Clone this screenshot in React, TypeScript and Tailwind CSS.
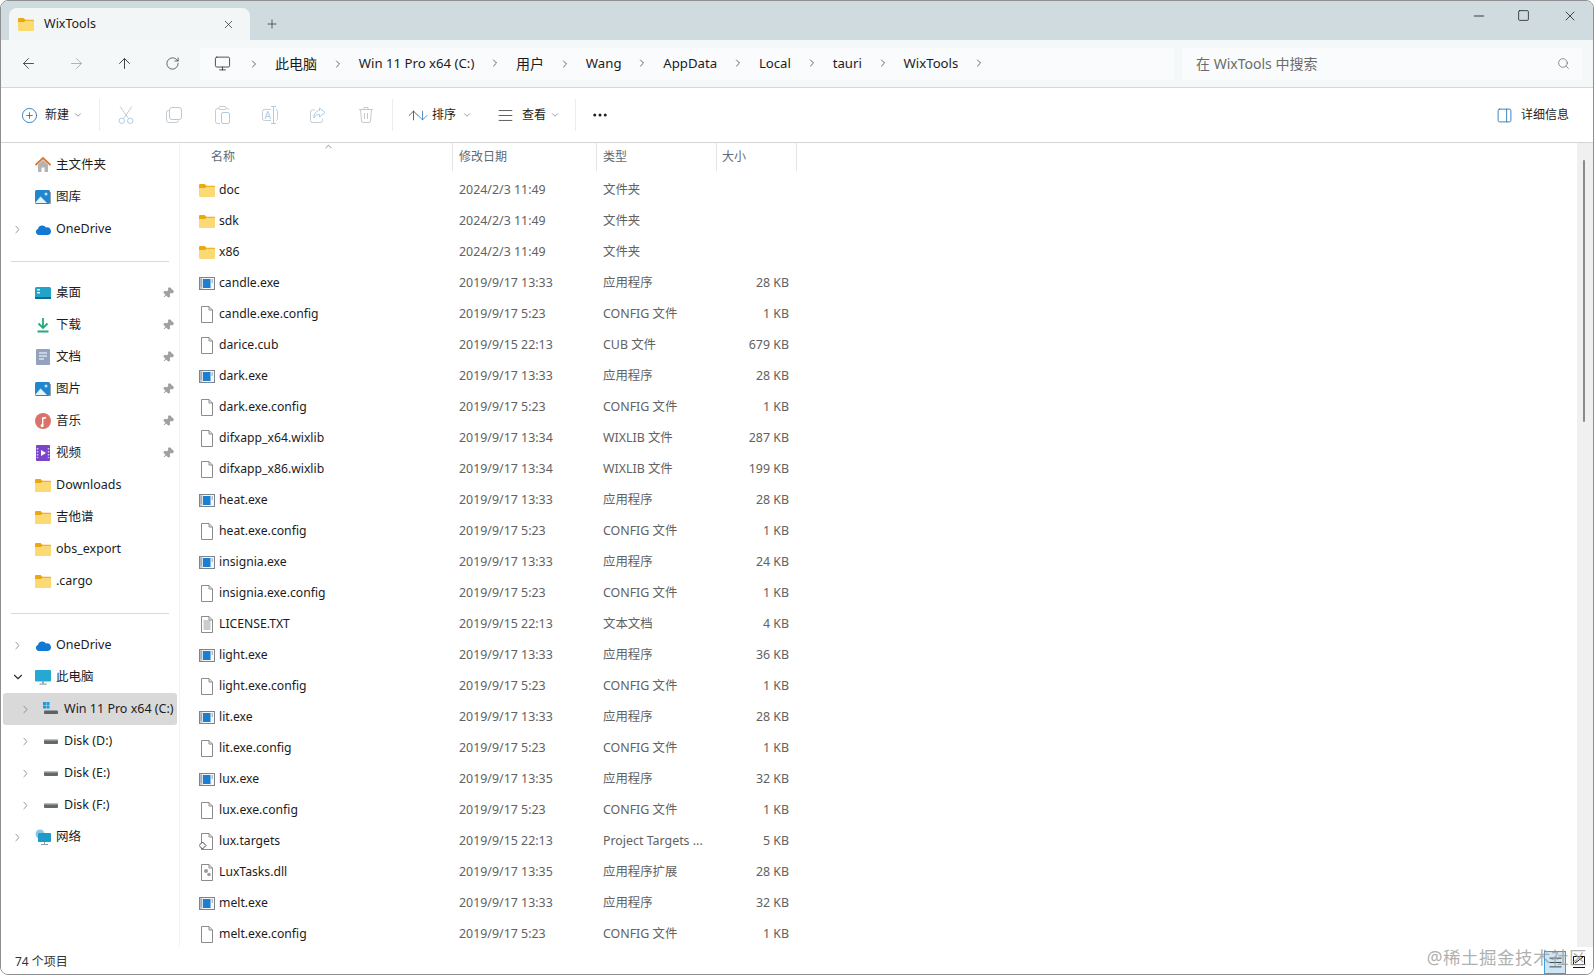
import {
  ArrowDown,
  ArrowLeft,
  ArrowRight,
  ArrowUp,
  AlignJustify,
  ChevronDown,
  ChevronRight,
  ChevronUp,
  CirclePlus,
  Minus,
  Monitor,
  MoreHorizontal,
  PanelRight,
  Pin,
  Plus,
  RotateCw,
  Search,
  Square,
  X,
} from "lucide-react";

type Tipo = "folder" | "exe" | "file" | "text" | "target" | "dll";

interface Archivo {
  nombre: string;
  fecha: string;
  tipo: string;
  size: string;
  icono: Tipo;
}

const D = "2024/2/3 11:49";
const A = "2019/9/17 13:33";
const C = "2019/9/17 5:23";

const archivos: Archivo[] = [
  { nombre: "doc", fecha: D, tipo: "文件夹", size: "", icono: "folder" },
  { nombre: "sdk", fecha: D, tipo: "文件夹", size: "", icono: "folder" },
  { nombre: "x86", fecha: D, tipo: "文件夹", size: "", icono: "folder" },
  { nombre: "candle.exe", fecha: A, tipo: "应用程序", size: "28 KB", icono: "exe" },
  { nombre: "candle.exe.config", fecha: C, tipo: "CONFIG 文件", size: "1 KB", icono: "file" },
  { nombre: "darice.cub", fecha: "2019/9/15 22:13", tipo: "CUB 文件", size: "679 KB", icono: "file" },
  { nombre: "dark.exe", fecha: A, tipo: "应用程序", size: "28 KB", icono: "exe" },
  { nombre: "dark.exe.config", fecha: C, tipo: "CONFIG 文件", size: "1 KB", icono: "file" },
  { nombre: "difxapp_x64.wixlib", fecha: "2019/9/17 13:34", tipo: "WIXLIB 文件", size: "287 KB", icono: "file" },
  { nombre: "difxapp_x86.wixlib", fecha: "2019/9/17 13:34", tipo: "WIXLIB 文件", size: "199 KB", icono: "file" },
  { nombre: "heat.exe", fecha: A, tipo: "应用程序", size: "28 KB", icono: "exe" },
  { nombre: "heat.exe.config", fecha: C, tipo: "CONFIG 文件", size: "1 KB", icono: "file" },
  { nombre: "insignia.exe", fecha: A, tipo: "应用程序", size: "24 KB", icono: "exe" },
  { nombre: "insignia.exe.config", fecha: C, tipo: "CONFIG 文件", size: "1 KB", icono: "file" },
  { nombre: "LICENSE.TXT", fecha: "2019/9/15 22:13", tipo: "文本文档", size: "4 KB", icono: "text" },
  { nombre: "light.exe", fecha: A, tipo: "应用程序", size: "36 KB", icono: "exe" },
  { nombre: "light.exe.config", fecha: C, tipo: "CONFIG 文件", size: "1 KB", icono: "file" },
  { nombre: "lit.exe", fecha: A, tipo: "应用程序", size: "28 KB", icono: "exe" },
  { nombre: "lit.exe.config", fecha: C, tipo: "CONFIG 文件", size: "1 KB", icono: "file" },
  { nombre: "lux.exe", fecha: "2019/9/17 13:35", tipo: "应用程序", size: "32 KB", icono: "exe" },
  { nombre: "lux.exe.config", fecha: C, tipo: "CONFIG 文件", size: "1 KB", icono: "file" },
  { nombre: "lux.targets", fecha: "2019/9/15 22:13", tipo: "Project Targets ...", size: "5 KB", icono: "target" },
  { nombre: "LuxTasks.dll", fecha: "2019/9/17 13:35", tipo: "应用程序扩展", size: "28 KB", icono: "dll" },
  { nombre: "melt.exe", fecha: A, tipo: "应用程序", size: "32 KB", icono: "exe" },
  { nombre: "melt.exe.config", fecha: C, tipo: "CONFIG 文件", size: "1 KB", icono: "file" },
];

function FolderIcon({ size = 16 }: { size?: number }) {
  return (
    <svg width={size} height={size * 0.8125} viewBox="0 0 16 13">
      <path d="M0 1.2A1.2 1.2 0 0 1 1.2 0h4.3L7.5 1.8H14.8A1.2 1.2 0 0 1 16 3V5H0z" fill="#e9a90f" />
      <path d="M0 4h6L7.5 2.8H14.8A1.2 1.2 0 0 1 16 4v7.8A1.2 1.2 0 0 1 14.8 13H1.2A1.2 1.2 0 0 1 0 11.8z" fill="#fbd973" />
    </svg>
  );
}

function FileIcon({ tipo }: { tipo: Tipo }) {
  if (tipo === "folder") return <FolderIcon />;
  if (tipo === "exe") {
    return (
      <svg width="16" height="13" viewBox="0 0 16 13">
        <rect x="0.5" y="0.5" width="15" height="12" fill="#f6f6f6" stroke="#7a858f" />
        <rect x="1" y="1" width="2.5" height="11" fill="#c3cbd2" />
        <rect x="4" y="2" width="7.5" height="9" fill="#1a7fd0" />
        <path d="M12.5 3h1.5M12.5 5h1.5M1.5 3h1.5M1.5 5h1.5M1.5 7h1.5M1.5 9h1.5" stroke="#7d8791" />
      </svg>
    );
  }
  return (
    <svg width="16" height="17" viewBox="0 0 16 17">
      <path d="M2.5 0.5H10L13.5 4V16.5H2.5z" fill="#fff" stroke="#8b8b8b" />
      <path d="M10 0.5V4H13.5" fill="none" stroke="#8b8b8b" />
      {tipo === "text" && <path d="M4.5 5h7M4.5 7h7M4.5 9h7M4.5 11h7M4.5 13h7" stroke="#9a9a9a" />}
      {tipo === "dll" && (
        <g fill="#9c9c9c">
          <circle cx="7" cy="7" r="2" />
          <circle cx="10" cy="10.5" r="1.8" />
        </g>
      )}
      {tipo === "target" && <path d="M3.5 9L7 12.5L3.5 16L0 12.5z" fill="#fff" stroke="#444" />}
    </svg>
  );
}

function Fila({ a }: { a: Archivo }) {
  return (
    <div className="flex h-[31px] items-center">
      <div className="flex w-[279px] shrink-0 items-center pl-[19px]">
        <div className="flex w-[16px] justify-center">
          <FileIcon tipo={a.icono} />
        </div>
        <span className="ml-[4px] text-[12.2px] text-[#1c1c1c]">{a.nombre}</span>
      </div>
      <div className="w-[144px] shrink-0 text-[12.4px] text-[#626262]">{a.fecha}</div>
      <div className="w-[118px] shrink-0 text-[12.4px] text-[#626262]">{a.tipo}</div>
      <div className="w-[68px] shrink-0 text-right text-[12.4px] text-[#626262]">{a.size}</div>
    </div>
  );
}

function HomeIcon() {
  return (
    <svg width="16" height="16" viewBox="0 0 16 16">
      <path d="M3 7.5L8 3L13 7.5V15H9.5V10.5H6.5V15H3z" fill="#b4b4b4" />
      <path d="M0.5 8L8 1L15.5 8" fill="none" stroke="#d9762c" strokeWidth="1.8" />
    </svg>
  );
}

function GalleryIcon() {
  return (
    <svg width="16" height="16" viewBox="0 0 16 16">
      <rect x="0" y="1" width="15" height="14" rx="1.5" fill="#2186d0" />
      <path d="M0 14L5.5 7.5L12 14z" fill="#e8f4fc" />
      <circle cx="11" cy="5" r="1.5" fill="#bfe0f6" />
      <rect x="15" y="3" width="1" height="12" fill="#90a4b2" />
    </svg>
  );
}

function CloudIcon() {
  return (
    <svg width="16" height="11" viewBox="0 0 16 11">
      <path d="M4 11A3.2 3.2 0 0 1 2.8 4.9A4.6 4.6 0 0 1 11 3.4A3.8 3.8 0 0 1 13 11z" fill="#1479d3" />
    </svg>
  );
}

function DesktopIcon() {
  return (
    <svg width="16" height="12" viewBox="0 0 16 12">
      <rect width="16" height="12" rx="1.5" fill="#23a3c9" />
      <rect y="10" width="16" height="2" fill="#0d6b9a" />
      <rect x="2" y="2" width="3" height="1.5" fill="#d8f1f8" />
      <rect x="2" y="5" width="3" height="1.5" fill="#d8f1f8" />
    </svg>
  );
}

function DownloadIcon() {
  return (
    <svg width="16" height="16" viewBox="0 0 16 16" fill="none" stroke="#23a97f" strokeWidth="1.8">
      <path d="M8 1V11M3.5 6.5L8 11L12.5 6.5M2.5 14.5H13.5" />
    </svg>
  );
}

function DocIcon() {
  return (
    <svg width="14" height="16" viewBox="0 0 14 16">
      <rect width="14" height="16" rx="1" fill="#93a2bd" />
      <path d="M3 4h8M3 7h8M3 10h5" stroke="#fff" strokeWidth="1.2" />
    </svg>
  );
}

function MusicIcon() {
  return (
    <svg width="16" height="16" viewBox="0 0 16 16">
      <circle cx="8" cy="8" r="8" fill="#d9726a" />
      <path d="M7 11V4.5L11 3.8V5.5L8.4 6V11.5A1.6 1.6 0 1 1 7 11z" fill="#fff" />
    </svg>
  );
}

function VideoIcon() {
  return (
    <svg width="14" height="16" viewBox="0 0 14 16">
      <rect width="14" height="16" rx="1" fill="#7a45c9" />
      <path d="M5 5L10 8L5 11z" fill="#fff" />
      <path d="M1.5 3v10M12.5 3v10" stroke="#d9c6f5" strokeWidth="1.5" strokeDasharray="1.5 1.5" />
    </svg>
  );
}

function PcIcon() {
  return (
    <svg width="16" height="15" viewBox="0 0 16 15">
      <rect width="16" height="11.5" rx="1" fill="#25a9d3" />
      <rect x="7" y="11.5" width="2" height="2" fill="#8aa0ad" />
      <rect x="4.5" y="13.5" width="7" height="1.2" fill="#8aa0ad" />
    </svg>
  );
}

function WinDriveIcon() {
  return (
    <svg width="16" height="14" viewBox="0 0 16 14">
      <rect x="0" y="0" width="3" height="3" fill="#1b9be0" />
      <rect x="3.5" y="0" width="3" height="3" fill="#1b9be0" />
      <rect x="0" y="3.5" width="3" height="3" fill="#1b9be0" />
      <rect x="3.5" y="3.5" width="3" height="3" fill="#1b9be0" />
      <rect x="1" y="8.5" width="14" height="3.5" rx="1" fill="#5d6266" />
    </svg>
  );
}

function DiskIcon() {
  return (
    <svg width="14" height="5" viewBox="0 0 14 5">
      <rect width="14" height="5" rx="1" fill="#63686c" />
      <rect y="0" width="14" height="1.5" fill="#b9bdc0" />
    </svg>
  );
}

function NetIcon() {
  return (
    <svg width="16" height="16" viewBox="0 0 16 16">
      <circle cx="5" cy="5" r="4.5" fill="#8fc6e6" />
      <rect x="3" y="4" width="13" height="9" rx="1" fill="#1f9bc9" />
      <path d="M9.5 13v2M6 15.5h7" stroke="#8aa0ad" />
    </svg>
  );
}

// iconos de la barra: deshabilitados, gris + azul claro
const GRIS = "#c6cbcf";
const AZUL = "#a9cdea";

function CutIcon() {
  return (
    <svg width="16" height="18" viewBox="0 0 16 18" fill="none">
      <path d="M2 0.5L10.5 12.5M14 0.5L5.5 12.5" stroke={GRIS} />
      <circle cx="3.8" cy="14.8" r="2.7" stroke={AZUL} />
      <circle cx="12.2" cy="14.8" r="2.7" stroke={AZUL} />
    </svg>
  );
}

function CopyIcon() {
  return (
    <svg width="16" height="16" viewBox="0 0 16 16" fill="none">
      <path d="M3 3.5H2.5A2 2 0 0 0 0.5 5.5V13A2.5 2.5 0 0 0 3 15.5H10.5A2 2 0 0 0 12.5 13.5" stroke={GRIS} />
      <rect x="3.5" y="0.5" width="12" height="12" rx="2.5" stroke={AZUL} />
    </svg>
  );
}

function PasteIcon() {
  return (
    <svg width="15" height="18" viewBox="0 0 15 18" fill="none">
      <path d="M4 2.5H2.5A2 2 0 0 0 0.5 4.5V15.5A2 2 0 0 0 2.5 17.5H5M11 2.5H12.5A2 2 0 0 1 14 4" stroke={GRIS} />
      <rect x="4" y="0.5" width="7" height="3" rx="1" stroke={GRIS} />
      <rect x="6.5" y="6.5" width="8" height="11" rx="1.5" stroke={AZUL} />
    </svg>
  );
}

function RenameIcon() {
  return (
    <svg width="17" height="18" viewBox="0 0 17 18" fill="none">
      <path d="M9 3.5H2.5A2 2 0 0 0 0.5 5.5V12.5A2 2 0 0 0 2.5 14.5H9M14 3.5A2 2 0 0 1 15.5 5.5V12.5A2 2 0 0 1 14 14.5" stroke={GRIS} />
      <path d="M9 0.5H14M9 17.5H14M11.5 0.5V17.5" stroke={AZUL} />
      <text x="2.5" y="12.5" fontSize="10" fill={AZUL}>A</text>
    </svg>
  );
}

function ShareIcon() {
  return (
    <svg width="16" height="16" viewBox="0 0 16 16" fill="none">
      <path d="M5 3H2.5A2 2 0 0 0 0.5 5V13.5A2 2 0 0 0 2.5 15.5H10.5A2 2 0 0 0 12.5 13.5V12" stroke={GRIS} />
      <path d="M9.5 1L15 5.5L9.5 10V7.5C7 7.5 5 8.5 3.8 11C3.8 7 6 3.8 9.5 3.5z" stroke={AZUL} />
    </svg>
  );
}

function BinIcon() {
  return (
    <svg width="14" height="16" viewBox="0 0 14 16" fill="none" stroke={GRIS}>
      <path d="M0 2.5H14M5 2.5V0.5H9V2.5M1.5 2.5L2.5 14A1.5 1.5 0 0 0 4 15.5H10A1.5 1.5 0 0 0 11.5 14L12.5 2.5M5.5 6V12M8.5 6V12" />
    </svg>
  );
}

interface ItemLateral {
  label: string;
  icon: React.ReactNode;
  chevron?: "right" | "down";
  pin?: boolean;
  nested?: boolean;
  activo?: boolean;
}

const grupo1: ItemLateral[] = [
  { label: "主文件夹", icon: <HomeIcon /> },
  { label: "图库", icon: <GalleryIcon /> },
  { label: "OneDrive", icon: <CloudIcon />, chevron: "right" },
];

const grupo2: ItemLateral[] = [
  { label: "桌面", icon: <DesktopIcon />, pin: true },
  { label: "下载", icon: <DownloadIcon />, pin: true },
  { label: "文档", icon: <DocIcon />, pin: true },
  { label: "图片", icon: <GalleryIcon />, pin: true },
  { label: "音乐", icon: <MusicIcon />, pin: true },
  { label: "视频", icon: <VideoIcon />, pin: true },
  { label: "Downloads", icon: <FolderIcon /> },
  { label: "吉他谱", icon: <FolderIcon /> },
  { label: "obs_export", icon: <FolderIcon /> },
  { label: ".cargo", icon: <FolderIcon /> },
];

const grupo3: ItemLateral[] = [
  { label: "OneDrive", icon: <CloudIcon />, chevron: "right" },
  { label: "此电脑", icon: <PcIcon />, chevron: "down" },
  { label: "Win 11 Pro x64 (C:)", icon: <WinDriveIcon />, chevron: "right", nested: true, activo: true },
  { label: "Disk (D:)", icon: <DiskIcon />, chevron: "right", nested: true },
  { label: "Disk (E:)", icon: <DiskIcon />, chevron: "right", nested: true },
  { label: "Disk (F:)", icon: <DiskIcon />, chevron: "right", nested: true },
  { label: "网络", icon: <NetIcon />, chevron: "right" },
];

function ItemSidebar({ item }: { item: ItemLateral }) {
  return (
    <div
      className={`mx-[2px] flex h-[32px] w-[174px] items-center rounded-[3px] ${item.activo ? "bg-[#d9d9d9]" : ""}`}
    >
      <div className={`flex shrink-0 ${item.nested ? "w-[40px] pl-[16px]" : "w-[32px] pl-[8px]"}`}>
        {item.chevron === "right" && <ChevronRight size={13} strokeWidth={1.5} className="text-[#7d7d7d]" />}
        {item.chevron === "down" && <ChevronDown size={14} strokeWidth={2} className="text-[#333333]" />}
      </div>
      <div className="flex w-[16px] shrink-0 justify-center">{item.icon}</div>
      <span className="ml-[5px] whitespace-nowrap text-[12.5px] text-[#1c1c1c]">{item.label}</span>
      {item.pin && <Pin size={12} className="ml-auto mr-[3px] rotate-45 fill-[#a0a0a0] text-[#a0a0a0]" />}
    </div>
  );
}

function ToolBtn({ children }: { children: React.ReactNode }) {
  return <div className="flex w-[48px] shrink-0 justify-center">{children}</div>;
}

const ruta = [
  { t: "此电脑", cjk: true },
  { t: "Win 11 Pro x64 (C:)", cjk: false },
  { t: "用户", cjk: true },
  { t: "Wang", cjk: false },
  { t: "AppData", cjk: false },
  { t: "Local", cjk: false },
  { t: "tauri", cjk: false },
  { t: "WixTools", cjk: false },
];

export default function App() {
  return (
    <div
      className="flex h-[975px] w-[1594px] flex-col overflow-hidden rounded-lg border border-[#8d8f90] bg-white"
      style={{ fontFamily: '"Noto Sans", "Noto Sans CJK SC", sans-serif' }}
    >
      {/* barra de título */}
      <div className="flex h-[39px] shrink-0 items-end bg-[#d0dbe0]">
        <div className="ml-[8px] flex h-[32px] w-[241px] items-center rounded-t-lg bg-[#f3f6f7] pl-[9px]">
          <FolderIcon size={16} />
          <span className="ml-[10px] text-[12.5px] text-[#1c1c1c]">WixTools</span>
          <X size={13} strokeWidth={1.4} className="ml-[126px] text-[#333333]" />
        </div>
        <div className="ml-[15px] flex h-[32px] items-center">
          <Plus size={14} strokeWidth={1.3} className="text-[#333333]" />
        </div>
        <div className="ml-auto flex h-[32px] items-start gap-[30px] pr-[15px]">
          <Minus size={16} strokeWidth={1.3} className="text-[#222222]" />
          <Square size={13} strokeWidth={1.5} className="mr-[2px] mt-[1px] text-[#222222]" />
          <X size={16} strokeWidth={1.2} className="text-[#222222]" />
        </div>
      </div>

      {/* barra de navegación */}
      <div className="flex h-[48px] shrink-0 items-center border-b border-[#d5d8da] bg-[#f5f8f9]">
        <div className="flex w-[199px] shrink-0 items-center pl-[3px]">
          <div className="flex w-[48px] justify-center text-[#444444]">
            <ArrowLeft size={17} strokeWidth={1.3} />
          </div>
          <div className="flex w-[48px] justify-center text-[#a8adb0]">
            <ArrowRight size={17} strokeWidth={1.3} />
          </div>
          <div className="flex w-[48px] justify-center text-[#333333]">
            <ArrowUp size={17} strokeWidth={1.3} />
          </div>
          <div className="flex w-[48px] justify-center text-[#444444]">
            <RotateCw size={15} strokeWidth={1.3} />
          </div>
        </div>
        <div className="flex h-[32px] w-[974px] shrink-0 items-center bg-[#fafbfc] pl-[14px]">
          <Monitor size={17} strokeWidth={1.2} className="text-[#333333]" />
          <ChevronRight size={12} strokeWidth={1.5} className="ml-[17px] text-[#333333]" />
          {ruta.map((r) => (
            <div key={r.t} className="flex items-center">
              <span className={`ml-[15px] text-[#1c1c1c] ${r.cjk ? "text-[14px]" : "pt-px text-[13.2px]"}`}>{r.t}</span>
              <ChevronRight size={12} strokeWidth={1.5} className="ml-[14.75px] text-[#333333]" />
            </div>
          ))}
        </div>
        <div className="ml-[8px] flex h-[32px] w-[400px] shrink-0 items-center justify-between bg-[#fafbfc] pl-[14px] pr-[12px]">
          <span className="text-[14px] text-[#6b6b6b]">在 WixTools 中搜索</span>
          <Search size={13} strokeWidth={1.3} className="text-[#666666]" />
        </div>
      </div>

      {/* barra de herramientas */}
      <div className="flex h-[55px] shrink-0 items-center border-b border-[#d5d5d5] bg-white">
        <div className="flex w-[98px] shrink-0 items-center pl-[20px]">
          <CirclePlus size={17} strokeWidth={1.2} className="text-[#1f6fb5]" />
          <span className="ml-[7px] text-[12px] text-[#1c1c1c]">新建</span>
          <ChevronDown size={10} className="ml-[4px] text-[#8a8a8a]" />
        </div>
        <div className="h-[32px] w-px bg-[#ededed]" />
        <div className="flex w-[292px] shrink-0 items-center justify-between px-[2px]">
          <ToolBtn><CutIcon /></ToolBtn>
          <ToolBtn><CopyIcon /></ToolBtn>
          <ToolBtn><PasteIcon /></ToolBtn>
          <ToolBtn><RenameIcon /></ToolBtn>
          <ToolBtn><ShareIcon /></ToolBtn>
          <ToolBtn><BinIcon /></ToolBtn>
        </div>
        <div className="h-[32px] w-px bg-[#ededed]" />
        <div className="flex w-[97px] shrink-0 items-center pl-[16px]">
          <ArrowUp size={15} strokeWidth={1.2} className="-ml-[3px] text-[#333333]" />
          <ArrowDown size={15} strokeWidth={1.2} className="-ml-[6px] text-[#1f6fb5]" />
          <span className="ml-[2px] text-[12px] text-[#1c1c1c]">排序</span>
          <ChevronDown size={10} className="ml-[6px] text-[#8a8a8a]" />
        </div>
        <div className="flex w-[85px] shrink-0 items-center pl-[7px]">
          <AlignJustify size={17} strokeWidth={1.1} className="text-[#333333]" />
          <span className="ml-[8px] text-[12px] text-[#1c1c1c]">查看</span>
          <ChevronDown size={10} className="ml-[4px] text-[#8a8a8a]" />
        </div>
        <div className="h-[32px] w-px bg-[#ededed]" />
        <MoreHorizontal size={18} strokeWidth={2} className="ml-[15px] text-[#222222]" />
        <div className="ml-auto flex items-center pr-[24px]">
          <PanelRight size={17} strokeWidth={1.2} className="text-[#1f6fb5]" />
          <span className="ml-[8px] text-[12px] text-[#1c1c1c]">详细信息</span>
        </div>
      </div>

      {/* cuerpo */}
      <div className="flex min-h-0 flex-1">
        <div className="w-[179px] shrink-0 border-r border-[#f3f3f3] pt-[6px]">
          {grupo1.map((i) => <ItemSidebar key={i.label} item={i} />)}
          <div className="mx-[10px] mb-[15px] mt-[16px] h-px w-[158px] bg-[#d9d9d9]" />
          {grupo2.map((i) => <ItemSidebar key={i.label} item={i} />)}
          <div className="mx-[10px] mb-[15px] mt-[16px] h-px w-[158px] bg-[#d9d9d9]" />
          {grupo3.map((i) => <ItemSidebar key={i.label} item={i} />)}
        </div>

        <div className="relative min-w-0 flex-1 overflow-hidden">
          {/* cabecera de columnas */}
          <div className="flex h-[28px] items-center">
            <div className="relative flex h-full w-[273px] shrink-0 items-center border-r border-[#e5e5e5] pl-[31px] text-[12px] text-[#5d6b75]">
              名称
              <ChevronUp size={11} strokeWidth={1.4} className="absolute left-[143px] top-[-2px] text-[#555555]" />
            </div>
            <div className="flex h-full w-[144px] shrink-0 items-center border-r border-[#e5e5e5] pl-[6px] text-[12px] text-[#5d6b75]">修改日期</div>
            <div className="flex h-full w-[120px] shrink-0 items-center border-r border-[#e5e5e5] pl-[6px] text-[12px] text-[#5d6b75]">类型</div>
            <div className="flex h-full w-[80px] shrink-0 items-center border-r border-[#e5e5e5] pl-[5px] text-[12px] text-[#5d6b75]">大小</div>
          </div>
          <div className="h-[4px]" />
          {archivos.map((a) => <Fila key={a.nombre} a={a} />)}

          {/* barra de desplazamiento */}
          <div className="absolute bottom-0 right-0 top-0 w-[16px] bg-[#f0f0f0]">
            <div className="absolute left-[6px] top-[17px] h-[262px] w-[2px] rounded-full bg-[#8a8a8a]" />
          </div>
        </div>
      </div>

      {/* barra de estado */}
      <div className="relative flex h-[27px] shrink-0 items-center bg-white pl-[14px] pt-[3px]">
        <span className="text-[12px] text-[#333333]">74 个项目</span>
        <div className="ml-auto flex items-center gap-[5px] pr-[6px]">
          <div className="flex h-[23px] w-[22px] items-center justify-center border border-[#3c9ed6] bg-[#cce6f5]">
            <AlignJustify size={15} strokeWidth={1.2} className="text-[#111111]" />
          </div>
          <div className="flex h-[23px] w-[16px] items-center justify-center">
            <svg width="14" height="14" viewBox="0 0 14 14" fill="none" stroke="#111111">
              <path d="M1.5 1.5h11v8h-11zM1 12.5h12M3 8L11 2" />
            </svg>
          </div>
        </div>
        <span className="absolute bottom-[4px] right-[6px] text-[17.5px] tracking-[0.5px] text-[#9b9b9b]/80">@稀土掘金技术社区</span>
      </div>
    </div>
  );
}
